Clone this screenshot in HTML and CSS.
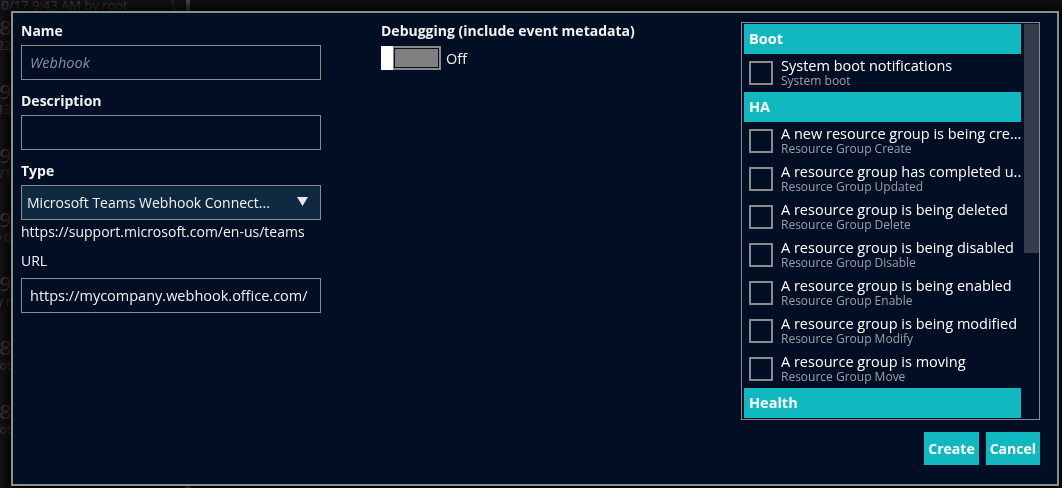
FILE: index.html
```html
<!DOCTYPE html>
<html lang="en">
<head>
    <meta charset="UTF-8">
    <title>New Webhook</title>
    <link rel="stylesheet" href="styles.css">
</head>
<body>
    <div class="page">
        <div class="side">
            <div class="side-top"><span>10/17 9:43 AM by root</span><span class="circle"></span></div>
            <div class="row"><span class="big">2018</span><span class="small">22</span></div>
            <div class="row"><span class="big">2029</span><span class="small">13</span></div>
            <div class="row"><span class="big">2029</span><span class="small">10/1</span></div>
            <div class="row"><span class="big">2029</span><span class="small">10 0</span></div>
            <div class="row"><span class="big">2029</span><span class="small">by r</span></div>
            <div class="row"><span class="big">2018</span><span class="small">root</span></div>
            <div class="row"><span class="big">2018</span><span class="small">root</span></div>
        </div>
        <div class="divider"></div>
        <div class="main"></div>
    </div>
    <div class="overlay"></div>

    <div class="dialog">
        <div class="col">
            <label class="label">Name</label>
            <div class="input placeholder">Webhook</div>

            <label class="label">Description</label>
            <div class="input"></div>

            <label class="label">Type</label>
            <div class="select">
                <span>Microsoft Teams Webhook Connect...</span>
                <svg width="11" height="9" viewBox="0 0 11 9"><path d="M0 0h11L5.5 9z" fill="#e8e8e8"/></svg>
            </div>
            <div class="help">https://support.microsoft.com/en-us/teams</div>

            <label class="label plain">URL</label>
            <div class="input value">https://mycompany.webhook.office.com/</div>
        </div>

        <div class="col">
            <label class="label">Debugging (include event metadata)</label>
            <div class="toggle-row">
                <div class="toggle">
                    <div class="track"></div>
                    <div class="knob"></div>
                </div>
                <span>Off</span>
            </div>
        </div>

        <div class="col right">
            <div class="events">
                <div class="events-list">
                    <div class="group">Boot</div>
                    <div class="event"><span class="check"></span><div><div class="title">System boot notifications</div><div class="sub">System boot</div></div></div>
                    <div class="group">HA</div>
                    <div class="event"><span class="check"></span><div><div class="title">A new resource group is being cre...</div><div class="sub">Resource Group Create</div></div></div>
                    <div class="event"><span class="check"></span><div><div class="title">A resource group has completed u...</div><div class="sub">Resource Group Updated</div></div></div>
                    <div class="event"><span class="check"></span><div><div class="title">A resource group is being deleted</div><div class="sub">Resource Group Delete</div></div></div>
                    <div class="event"><span class="check"></span><div><div class="title">A resource group is being disabled</div><div class="sub">Resource Group Disable</div></div></div>
                    <div class="event"><span class="check"></span><div><div class="title">A resource group is being enabled</div><div class="sub">Resource Group Enable</div></div></div>
                    <div class="event"><span class="check"></span><div><div class="title">A resource group is being modified</div><div class="sub">Resource Group Modify</div></div></div>
                    <div class="event"><span class="check"></span><div><div class="title">A resource group is moving</div><div class="sub">Resource Group Move</div></div></div>
                    <div class="group">Health</div>
                </div>
                <div class="scrollbar"><div class="thumb"></div></div>
            </div>
            <div class="buttons">
                <button class="button">Create</button>
                <button class="button">Cancel</button>
            </div>
        </div>
    </div>
</body>
</html>
```

FILE: styles.css
```css
body {
    margin: 0;
    width: 1062px;
    height: 488px;
    overflow: hidden;
    background: #1c1c1e;
    font-family: 'Open Sans', 'Noto Sans', sans-serif;
    color: #f2f2f2;
}
.page {
    display: flex;
    height: 488px;
    overflow: hidden;
}
.side {
    width: 186px;
    overflow: hidden;
    color: #7a7a7a;
    background: #262628;
}
.side-top {
    height: 11px;
    overflow: hidden;
    display: flex;
    align-items: flex-end;
    gap: 44px;
    font-size: 13px;
    line-height: 15px;
    white-space: nowrap;
    margin-left: -6px;
}
.side-top span:first-child {
    margin-bottom: -2px;
}
.circle {
    flex: none;
    width: 28px;
    height: 28px;
    border: 2px solid #4a4a4a;
    border-radius: 50%;
    margin-bottom: -8px;
}
.row {
    width: 11px;
    height: 58px;
    overflow: hidden;
    display: flex;
    flex-direction: column;
    align-items: flex-end;
    padding-top: 6px;
    white-space: nowrap;
}
.row .big {
    font-size: 20px;
    line-height: 22px;
}
.row .small {
    font-size: 12px;
    line-height: 14px;
}
.divider {
    width: 4px;
    background: #8a8a8a;
}
.main {
    flex: 1;
    background: #1e2126;
}
.overlay {
    position: fixed;
    inset: 0;
    background: rgba(0, 0, 0, 0.4);
}
.dialog {
    position: absolute;
    left: 11px;
    top: 11px;
    width: 1036px;
    height: 462px;
    border: 2px solid #8e8e8e;
    background: #020e24;
    box-shadow: 0 0 12px 6px rgba(0, 0, 0, 0.85);
    display: grid;
    grid-template-columns: 360px 360px 299px;
    padding: 9px 0 0 8px;
    box-sizing: content-box;
}
.col {
    display: flex;
    flex-direction: column;
    align-items: flex-start;
}
.label {
    font-weight: bold;
    font-size: 14px;
    line-height: 18px;
    margin-bottom: 5px;
}
.label.plain {
    font-weight: normal;
    margin-top: 11px;
    margin-bottom: 8px;
}
.input {
    width: 290px;
    height: 33px;
    border: 1px solid #8a8a8a;
    margin-bottom: 12px;
    font-size: 14.5px;
    line-height: 33px;
    padding-left: 8px;
    box-sizing: content-box;
}
.input.placeholder {
    font-style: italic;
    color: #8b8f98;
}
.input.value {
    color: #f0f0f0;
}
.select {
    width: 300px;
    height: 35px;
    box-sizing: border-box;
    border: 1px solid #8a8a8a;
    background: #0f2a40;
    display: flex;
    align-items: center;
    justify-content: space-between;
    padding: 0 12px 0 5px;
    font-size: 14px;
}
.select svg {
    margin-top: -2px;
}
.help {
    font-size: 14px;
    line-height: 18px;
    margin-top: 3px;
}
.toggle-row {
    display: flex;
    align-items: center;
    gap: 5px;
    margin-top: 1px;
    font-size: 14.5px;
}
.toggle {
    position: relative;
    width: 60px;
    height: 24px;
}
.track {
    margin-left: 11px;
    height: 24px;
    border: 2px solid #8a8a8a;
    padding: 1px;
    box-sizing: border-box;
}
.track::after {
    content: "";
    display: block;
    height: 100%;
    background: #808080;
}
.knob {
    position: absolute;
    left: 0;
    top: 0;
    width: 12px;
    height: 24px;
    background: #ffffff;
}
.events {
    width: 299px;
    height: 398px;
    border: 1px solid #8a8a8a;
    display: flex;
    padding: 1px 0 0 2px;
    box-sizing: border-box;
}
.events-list {
    width: 277px;
    overflow: hidden;
}
.group {
    height: 30px;
    background: #12b8c0;
    font-weight: bold;
    font-size: 14.5px;
    line-height: 30px;
    padding-left: 5px;
    color: #fff;
}
.event {
    height: 38px;
    display: flex;
    align-items: center;
    gap: 8px;
    padding-left: 5px;
    white-space: nowrap;
}
.check {
    width: 20px;
    height: 20px;
    border: 2px solid #8a8a8a;
    flex: none;
}
.title {
    font-size: 14.5px;
    line-height: 16px;
    color: #fff;
}
.sub {
    font-size: 12px;
    line-height: 14px;
    color: #9aa0a8;
}
.scrollbar {
    width: 15px;
    margin-left: 3px;
}
.thumb {
    height: 229px;
    background: #353c4c;
}
.buttons {
    align-self: flex-end;
    display: flex;
    gap: 7px;
    margin-top: 12px;
}
.button {
    background: #12b8c0;
    color: #fff;
    border: none;
    height: 33px;
    padding: 0 4px;
    font-family: inherit;
    font-weight: bold;
    font-size: 14px;
}
```
